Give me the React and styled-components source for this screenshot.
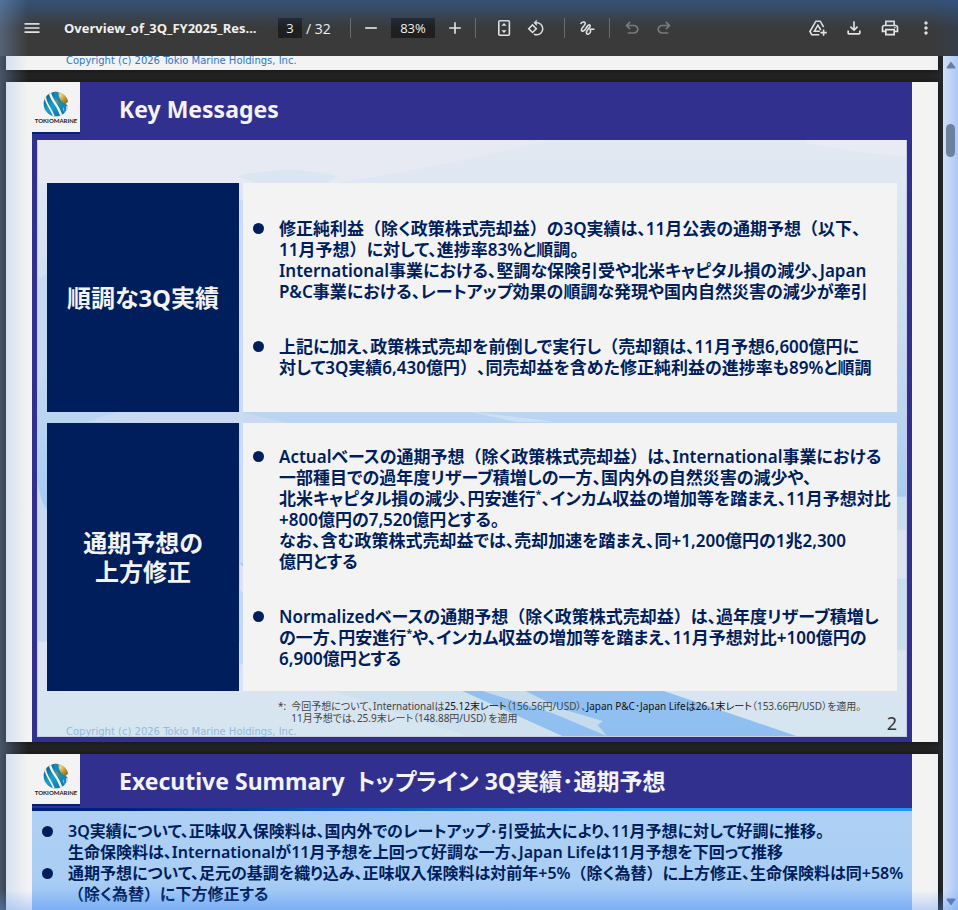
import React from "react";
import styled, { createGlobalStyle } from "styled-components";
import {
  MdMenu,
  MdRemove,
  MdAdd,
  MdRotate90DegreesCcw,
  MdOutlineFileDownload,
  MdOutlinePrint,
  MdMoreVert,
} from "react-icons/md";

const UNDO_PATH =
  "M280-200v-80h284q63 0 109.5-40T720-420q0-60-46.5-100T564-560H312l104 104-56 56-200-200 200-200 56 56-104 104h252q97 0 166.5 63T800-420q0 94-69.5 157T564-200H280Z";

const UndoIcon = ({ flip }) => (
  <svg width="20" height="20" viewBox="0 -960 960 960" fill="currentColor" aria-hidden="true">
    <path d={UNDO_PATH} transform={flip ? "translate(960 0) scale(-1 1)" : undefined} />
  </svg>
);

const FitIcon = () => (
  <svg width="20" height="20" viewBox="0 0 20 20" fill="none" aria-hidden="true">
    <rect x="4.8" y="2.8" width="10.6" height="14.4" rx="1" stroke="currentColor" strokeWidth="1.6" />
    <path d="M10 5l2.6 2.8H7.4zM10 15l2.6-2.8H7.4z" fill="currentColor" />
  </svg>
);

const DrawIcon = () => (
  <svg width="20" height="20" viewBox="0 0 20 20" fill="none" stroke="currentColor" strokeWidth="1.6" aria-hidden="true">
    <path d="M3.6 6C4.6 3.4 8.3 3.2 8.3 5.6C8.3 7.8 4 9.6 4.4 12C4.8 14.2 7.4 12.8 8.8 10.6C10 8.6 11.4 6 12.9 7.2C14.6 8.6 9.2 11.6 9.4 14.8C9.6 17.2 13.6 16.4 13.6 13C13.6 10.4 10.8 11.4 17.5 11.2" />
  </svg>
);

const DriveIcon = () => (
  <svg width="20" height="20" viewBox="0 0 20 20" fill="none" stroke="currentColor" strokeWidth="1.6" aria-hidden="true">
    <path d="M15.6 9L12.2 3.2H7.9L1.9 13.5l1.9 3.2h7.4" />
    <path d="M11.8 13.2H6.4L9.9 7.2l2.9 4.8" />
    <path d="M15.6 11.4v6.4M12.4 14.6h6.4" />
  </svg>
);

const Logo = () => (
  <LogoBox>
    <svg width="26" height="26" viewBox="0 0 78 78" role="img" aria-label="Tokio Marine logo">
      <defs>
        <linearGradient id="sea" x1="0" y1="0" x2="1" y2="1">
          <stop offset="0" stopColor="#0a3f66" />
          <stop offset="0.45" stopColor="#1aa0cc" />
          <stop offset="1" stopColor="#0d5f95" />
        </linearGradient>
        <radialGradient id="sun" cx="0.35" cy="0.3" r="0.75">
          <stop offset="0" stopColor="#f3dc94" />
          <stop offset="0.5" stopColor="#c39a35" />
          <stop offset="1" stopColor="#8c6a1c" />
        </radialGradient>
        <clipPath id="globe">
          <circle cx="39" cy="39" r="37" />
        </clipPath>
      </defs>
      <g clipPath="url(#globe)">
        <path d="M0 0h38L78 50V78H0z" fill="url(#sea)" />
        <circle cx="58" cy="21" r="20" fill="url(#sun)" />
        <g fill="none" stroke="#f3f3f3">
          <path d="M7 18C8 40 24 50 34 80" strokeWidth="5" />
          <path d="M21 4C23 28 46 40 56 78" strokeWidth="7" />
          <path d="M74 46C78 52 74 62 66 70L60 50z" fill="#f3f3f3" strokeWidth="1" />
        </g>
        <path d="M33 0C32 20 44 30 58 46C62 52 66 60 62 68C74 58 72 46 62 37C51 28 45 16 47 0z" fill="#1789b8" />
      </g>
    </svg>
    <LogoText>TOKIOMARINE</LogoText>
  </LogoBox>
);

const SlideBackdrop = () => (
  <Backdrop viewBox="0 0 870 598" preserveAspectRatio="none" aria-hidden="true">
    <defs>
      <linearGradient id="sky" x1="0" y1="0" x2="0" y2="1">
        <stop offset="0" stopColor="#e2e9f3" />
        <stop offset="0.1" stopColor="#dce6f2" />
        <stop offset="0.45" stopColor="#bcd6f1" />
        <stop offset="0.7" stopColor="#9ac5f2" />
        <stop offset="1" stopColor="#8fbff0" />
      </linearGradient>
      <linearGradient id="haze" x1="0" y1="0" x2="0" y2="1">
        <stop offset="0" stopColor="#dde2f3" />
        <stop offset="0.6" stopColor="#dce3f2" />
        <stop offset="1" stopColor="#d5e6f0" />
      </linearGradient>
    </defs>
    <rect width="870" height="598" fill="url(#sky)" />
    <path d="M0 0H510Q420 24 300 43H0z" fill="#e7eaf3" />
    <path d="M770 3C800 8 835 15 870 16V0H770z" fill="#e8ebf3" />
    <path d="M200 36q50-12 100 0l-10 8h-70z" fill="#dce6f2" />
    <path d="M0 140l10-7v80q-4 20-10 40z" fill="#c8daf3" />
    <path d="M50 283q60-26 150-11l60 14z" fill="#c9d9f1" />
    <path d="M430 272l90 11h-40z" fill="#cfdff3" />
    <path d="M202 60h4v365h-4z" fill="#cbdbf3" />
    <path d="M0 345q3 20 10 27v131H0z" fill="#c8d9f1" />
    <path d="M0 503h202V425l4 3V551h215l104 47H0z" fill="url(#haze)" />
    <path d="M202 450l4 6v70h-4z" fill="#c3d9f2" />
    <path d="M290 551h131l104 47H430z" fill="#cfe0ef" />
    <path d="M440 551h45l40 20 41 12-5 4 9 11-52-22z" fill="#c6dcec" />
    <path d="M622 551L760 598h110V390h-14v161z" fill="url(#haze)" />
    <path d="M856 358h14v33h-14zM856 440h14v72h-14z" fill="#c8deee" />
  </Backdrop>
);

// Full-width brackets keep their full advance inside proportional text
const Brackets = ({ children }) =>
  children.split(/([（）])/).map((part, i) =>
    part === "（" || part === "）" ? <Bracket key={i}>{part}</Bracket> : part
  );

const Lines = ({ items }) =>
  items.map((line, i) => (
    <Line key={i}>
      {line.split("*").map((part, j) => (
        <React.Fragment key={j}>
          {j > 0 && <sup>*</sup>}
          <Brackets>{part}</Brackets>
        </React.Fragment>
      ))}
    </Line>
  ));

const progress = [
  [
    "修正純利益（除く政策株式売却益）の3Q実績は、11月公表の通期予想（以下、",
    "11月予想）に対して、進捗率83%と順調。",
    "International事業における、堅調な保険引受や北米キャピタル損の減少、Japan",
    "P&C事業における、レートアップ効果の順調な発現や国内自然災害の減少が牽引",
  ],
  [
    "上記に加え、政策株式売却を前倒しで実行し（売却額は、11月予想6,600億円に",
    "対して3Q実績6,430億円）、同売却益を含めた修正純利益の進捗率も89%と順調",
  ],
];

const revision = [
  [
    "Actualベースの通期予想（除く政策株式売却益）は、International事業における",
    "一部種目での過年度リザーブ積増しの一方、国内外の自然災害の減少や、",
    "北米キャピタル損の減少、円安進行*、インカム収益の増加等を踏まえ、11月予想対比",
    "+800億円の7,520億円とする。",
    "なお、含む政策株式売却益では、売却加速を踏まえ、同+1,200億円の1兆2,300",
    "億円とする",
  ],
  [
    "Normalizedベースの通期予想（除く政策株式売却益）は、過年度リザーブ積増し",
    "の一方、円安進行*や、インカム収益の増加等を踏まえ、11月予想対比+100億円の",
    "6,900億円とする",
  ],
];

const summary = [
  [
    "3Q実績について、正味収入保険料は、国内外でのレートアップ･引受拡大により、11月予想に対して好調に推移。",
    "生命保険料は、Internationalが11月予想を上回って好調な一方、Japan Lifeは11月予想を下回って推移",
  ],
  [
    "通期予想について、足元の基調を織り込み、正味収入保険料は対前年+5%（除く為替）に上方修正、生命保険料は同+58%",
    "（除く為替）に下方修正する",
  ],
];

const App = () => (
  <>
    <GlobalStyle />
    <Viewer>
      <Toolbar>
        <IconButton aria-label="Menu"><MdMenu size={20} /></IconButton>
        <FileName>Overview_of_3Q_FY2025_Res...</FileName>
        <ToolInput aria-label="Page number" defaultValue="3" $width={24} />
        <PageTotal>/ 32</PageTotal>
        <ToolGroup $pad={4} $gap={4}>
          <IconButton aria-label="Zoom out"><MdRemove size={20} /></IconButton>
          <ToolInput aria-label="Zoom level" defaultValue="83%" $width={44} />
          <IconButton aria-label="Zoom in"><MdAdd size={20} /></IconButton>
        </ToolGroup>
        <ToolGroup $pad={12} $gap={0}>
          <IconButton aria-label="Fit to page"><FitIcon /></IconButton>
          <IconButton aria-label="Rotate"><MdRotate90DegreesCcw size={18} /></IconButton>
        </ToolGroup>
        <ToolGroup $pad={6} $gap={0}>
          <IconButton aria-label="Draw"><DrawIcon /></IconButton>
        </ToolGroup>
        <ToolGroup $pad={6} $gap={0}>
          <IconButton aria-label="Undo" disabled><UndoIcon /></IconButton>
          <IconButton aria-label="Redo" disabled><UndoIcon flip /></IconButton>
        </ToolGroup>
        <ToolActions>
          <IconButton aria-label="Save to Drive"><DriveIcon /></IconButton>
          <IconButton aria-label="Download"><MdOutlineFileDownload size={20} /></IconButton>
          <IconButton aria-label="Print"><MdOutlinePrint size={20} /></IconButton>
          <IconButton aria-label="More"><MdMoreVert size={20} /></IconButton>
        </ToolActions>
      </Toolbar>

      <Body>
        <Pages>
          <PageTail>
            <Copyright>Copyright (c) 2026 Tokio Marine Holdings, Inc.</Copyright>
          </PageTail>

          <Page>
            <SlideHeader>
              <Logo />
              <SlideTitle>Key Messages</SlideTitle>
            </SlideHeader>
            <SlideBody>
              <SlideBackdrop />
              <Messages>
                <MessageLabel>順調な3Q実績</MessageLabel>
                <MessagePanel $pad={35}>
                  {progress.map((items, i) => (
                    <Bullet key={i}><Lines items={items} /></Bullet>
                  ))}
                </MessagePanel>
                <MessageLabel>通期予想の<br />上方修正</MessageLabel>
                <MessagePanel $pad={23}>
                  {revision.map((items, i) => (
                    <Bullet key={i}><Lines items={items} /></Bullet>
                  ))}
                </MessagePanel>
              </Messages>
              <Footer>
                <Footnote>
                  <span>*:</span>
                  <span>
                    今回予想について、Internationalは<b>25.12末レート</b>（156.56円/USD）、<b>Japan P&amp;C･Japan Lifeは26.1末レート</b>（153.66円/USD）を適用。<br />
                    11月予想では、25.9末レート（148.88円/USD）を適用
                  </span>
                </Footnote>
                <FooterRow>
                  <Copyright $faded>Copyright (c) 2026 Tokio Marine Holdings, Inc.</Copyright>
                  <PageNumber>2</PageNumber>
                </FooterRow>
              </Footer>
            </SlideBody>
          </Page>

          <Page>
            <SlideHeader $ruled>
              <Logo />
              <SlideTitle>Executive Summary&ensp;トップライン 3Q実績･通期予想</SlideTitle>
            </SlideHeader>
            <Rule />
            <SummaryBody>
              {summary.map((items, i) => (
                <Bullet key={i} $compact><Lines items={items} /></Bullet>
              ))}
            </SummaryBody>
          </Page>
        </Pages>

        <ScrollBar>
          <ScrollArrow aria-label="Scroll up">
            <svg width="10" height="8" viewBox="0 0 10 8"><path d="M5 .5l4.5 6a1 1 0 0 1-1 1h-7a1 1 0 0 1-1-1z" fill="#6b80a0" /></svg>
          </ScrollArrow>
          <ScrollThumb />
          <ScrollArrow aria-label="Scroll down">
            <svg width="10" height="8" viewBox="0 0 10 8"><path d="M5 7.5l4.5-6a1 1 0 0 0-1-1h-7a1 1 0 0 0-1 1z" fill="#5c7eb4" /></svg>
          </ScrollArrow>
        </ScrollBar>
      </Body>
      <EdgeGlow />
    </Viewer>
  </>
);

export default App;

// Styled Components

const GlobalStyle = createGlobalStyle`
  * {
    box-sizing: border-box;
  }

  body {
    margin: 0;
    background: #272727;
    font-family: "Noto Sans", "Noto Sans CJK JP", sans-serif;
    text-spacing-trim: space-all;
  }
`;

const Viewer = styled.div`
  position: relative;
  display: flex;
  flex-direction: column;
  height: 100vh;
  overflow: hidden;
`;

const Toolbar = styled.header`
  display: flex;
  align-items: center;
  flex: none;
  height: 56px;
  padding: 0 16px;
  background: #3a3a3a;
  color: #f1f1f1;
  font-family: "Open Sans", sans-serif;
  font-size: 14px;
`;

const IconButton = styled.button`
  display: flex;
  align-items: center;
  justify-content: center;
  width: 32px;
  height: 32px;
  padding: 0;
  border: none;
  background: none;
  color: #e3e3e3;
  cursor: pointer;

  &:disabled {
    color: #7a7a7a;
  }
`;

const FileName = styled.span`
  width: 192px;
  margin: 0 22px 0 16px;
  font-size: 13px;
  font-weight: 700;
  white-space: nowrap;
`;

const ToolInput = styled.input`
  width: ${({ $width }) => $width}px;
  height: 20px;
  padding: 0;
  border: none;
  background: #1f1f1f;
  color: #f1f1f1;
  font: inherit;
  font-size: 13px;
  text-align: center;
`;

const PageTotal = styled.span`
  width: 48px;
  padding-left: 4px;
  white-space: nowrap;
`;

const ToolGroup = styled.div`
  display: flex;
  align-items: center;
  gap: ${({ $gap }) => $gap}px;
  padding-right: ${({ $pad }) => $pad}px;

  &::before {
    content: "";
    width: 1px;
    height: 20px;
    margin-right: ${({ $pad, $gap }) => $pad - $gap}px;
    background: #6c6c6c;
  }
`;

const ToolActions = styled.div`
  display: flex;
  gap: 4px;
  margin-left: auto;
`;

const Body = styled.div`
  display: flex;
  flex: 1;
  min-height: 0;
`;

const Pages = styled.main`
  display: flex;
  flex-direction: column;
  flex: 1;
  gap: 12px;
  min-width: 0;
  padding: 0 5px 0 6px;
  overflow: hidden;
`;

const Page = styled.section`
  flex: none;
  padding: 0 26px;
  background: #f3f3f3;
  box-shadow: 0 0 8px rgba(0, 0, 0, 0.6);
`;

const PageTail = styled(Page)`
  display: flex;
  height: 14px;
  padding: 0 60px;
`;

const Copyright = styled.small`
  color: ${({ $faded }) => ($faded ? "#93b9dc" : "#2a78cc")};
  font-family: "DejaVu Sans", sans-serif;
  font-size: 10px;
  line-height: 10px;
`;

const SlideHeader = styled.div`
  display: flex;
  height: ${({ $ruled }) => ($ruled ? 54 : 58)}px;
  background: #31308f;
`;

const LogoBox = styled.div`
  display: flex;
  flex-direction: column;
  align-items: center;
  width: 48px;
  height: 52px;
  padding-top: 9px;
  border-bottom: 2px solid #00207e;
  background: #f3f3f3;
`;

const LogoText = styled.span`
  color: #222;
  font-family: Lato, sans-serif;
  font-size: 6px;
  font-weight: 700;
  line-height: 8px;
`;

const SlideTitle = styled.h1`
  margin: 0 0 0 39px;
  color: #f3f3f3;
  font-size: 23px;
  font-weight: 700;
  font-feature-settings: "palt";
  line-height: 54px;
  white-space: nowrap;
`;

const SlideBody = styled.div`
  position: relative;
  padding: 43px 10px 0;
  border: 5px solid #31308f;
  border-top: none;
`;

const Backdrop = styled.svg`
  position: absolute;
  inset: 0;
  width: 100%;
  height: 100%;
  border: 1px solid rgba(170, 178, 215, 0.6);
  border-top: none;
`;

const Messages = styled.div`
  position: relative;
  display: grid;
  grid-template-columns: 192px 1fr;
  gap: 11px 4px;
`;

const MessageLabel = styled.h2`
  display: flex;
  align-items: center;
  justify-content: center;
  margin: 0;
  background: #001e5c;
  color: #f3f3f3;
  font-size: 24px;
  font-weight: 700;
  font-feature-settings: "palt";
  line-height: 29px;
  text-align: center;
`;

const MessagePanel = styled.ul`
  display: flex;
  flex-direction: column;
  gap: 34px;
  margin: 0;
  padding: ${({ $pad }) => $pad}px 0 ${({ $pad }) => $pad - 1}px 10px;
  background: #f3f3f3;
  list-style: none;
`;

const Bullet = styled.li`
  position: relative;
  padding-left: 26px;
  color: #001e5c;
  font-size: ${({ $compact }) => ($compact ? 16 : 17)}px;
  font-weight: 600;
  font-feature-settings: "palt";
  line-height: 21px;
  white-space: nowrap;

  &::before {
    content: "";
    position: absolute;
    top: 5px;
    left: 0;
    width: 11px;
    height: 11px;
    border-radius: 50%;
    background: #001e5c;
  }

  sup {
    font-size: 11px;
    line-height: 0;
  }
`;

const Line = styled.div`
  height: 21px;
`;

const Bracket = styled.span`
  font-feature-settings: normal;
`;

const Footer = styled.div`
  position: relative;
  padding: 9px 0 0 19px;
`;

const Footnote = styled.p`
  display: flex;
  gap: 5px;
  margin: 0 0 0 212px;
  color: #444;
  font-size: 10px;
  font-feature-settings: "palt";
  line-height: 12px;
  white-space: nowrap;

  b {
    color: #111;
    font-weight: 400;
  }
`;

const FooterRow = styled.div`
  display: flex;
  align-items: flex-end;
  justify-content: space-between;
  height: 13px;
`;

const PageNumber = styled.span`
  color: #333;
  font-size: 18px;
  line-height: 28px;
`;

const Rule = styled.div`
  height: 3px;
  background: linear-gradient(90deg, #00207e 10%, #1b98ee 70%);
`;

const SummaryBody = styled.ul`
  margin: 0;
  padding: 10px 10px 60px;
  background: linear-gradient(#aed0f3, #a9cdf4 70px, #8dbcf5 100px);
  list-style: none;
`;

const ScrollBar = styled.aside`
  display: flex;
  flex-direction: column;
  align-items: center;
  flex: none;
  width: 15px;
  padding: 5px 0 4px;
  background: linear-gradient(90deg, #dde7f7, #bdd4fa);
`;

const ScrollArrow = styled.button`
  display: flex;
  padding: 0;
  border: none;
  background: none;
`;

const ScrollThumb = styled.div`
  width: 9px;
  height: 33px;
  margin: 55px 0 auto;
  border-radius: 5px;
  background: #74849c;
`;

const EdgeGlow = styled.div`
  position: absolute;
  inset: 0;
  background:
    linear-gradient(90deg, rgba(136, 176, 232, 0.35), rgba(136, 176, 232, 0) 28px),
    linear-gradient(270deg, rgba(20, 90, 210, 0.1), rgba(20, 90, 210, 0) 28px),
    linear-gradient(180deg, rgba(50, 110, 190, 0.45), rgba(50, 110, 190, 0) 28px),
    linear-gradient(0deg, rgba(90, 150, 245, 0.35), rgba(90, 150, 245, 0) 20px);
  pointer-events: none;
`;
